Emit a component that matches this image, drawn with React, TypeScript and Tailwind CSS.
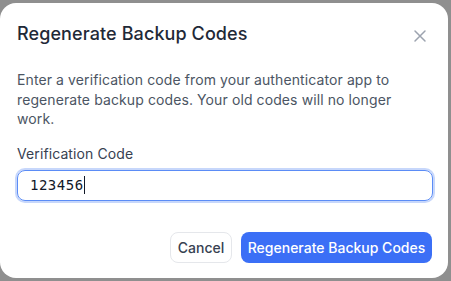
import React from "react";

export default function App() {
  return (
    <div className="w-[451px] h-[281px] bg-[#8f8f8f] overflow-hidden" style={{ fontFamily: "Inter, 'Noto Sans', sans-serif" }}>
      <div className="mt-[3px] w-[448px] h-[275px] bg-white rounded-[16px] flex flex-col px-[17px] pt-[17px] pb-[15px]">
        <div className="flex items-center justify-between h-[28px]">
          <h2 className="text-[18px] leading-[28px] font-medium text-[#1f2937] tracking-[0.1px]">Regenerate Backup Codes</h2>
          <button className="w-[20px] h-[20px] flex items-center justify-center text-[#9ca3af] mr-[1px] mt-[4px]">
            <svg width="14" height="14" viewBox="0 0 14 14" fill="none" stroke="currentColor" strokeWidth="1.5" strokeLinecap="round">
              <path d="M2 2L12 12M12 2L2 12" />
            </svg>
          </button>
        </div>
        <p className="mt-[22px] text-[14px] leading-[19.5px] text-[#4b5563] tracking-[0.1px] pr-[20px]">
          Enter a verification code from your authenticator app to regenerate backup codes. Your old codes will no longer work.
        </p>
        <label className="mt-[15px] text-[14px] leading-[20px] text-[#374151] tracking-[0.1px]">Verification Code</label>
        <div className="mt-[6px] h-[31px] w-[416px] rounded-[8px] border border-[#5b8cf6] ring-2 ring-[#c7d7fb] flex items-center pl-[12px]">
          <span className="text-[14px] text-[#111827] tracking-[0.5px]" style={{ fontFamily: "'DejaVu Sans Mono', 'Liberation Mono', monospace" }}>123456</span>
          <span className="w-[1px] h-[18px] bg-[#111827]" />
        </div>
        <div className="mt-auto flex justify-end gap-[9px] mr-[-1px]">
          <button className="h-[31px] w-[62px] rounded-[8px] border border-[#e5e7eb] bg-white text-[14px] text-[#374151] font-medium">Cancel</button>
          <button className="h-[31px] w-[191px] rounded-[8px] bg-[#3b6ff6] text-[14px] text-white font-medium">Regenerate Backup Codes</button>
        </div>
      </div>
    </div>
  );
}
